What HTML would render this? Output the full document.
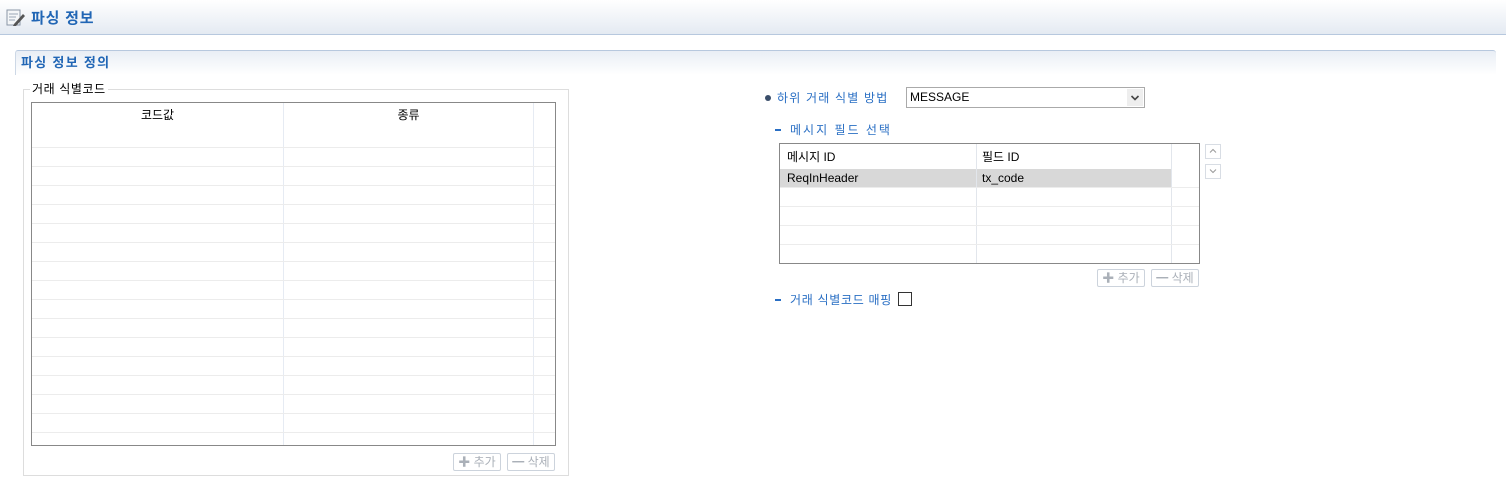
<!DOCTYPE html>
<html><head><meta charset="utf-8"><style>
*{margin:0;padding:0;box-sizing:border-box}
body{width:1506px;height:486px;background:#fff;position:relative;overflow:hidden;font-family:"Liberation Sans","Noto Sans CJK KR",sans-serif;font-size:12px;color:#000}
.a{position:absolute}
.blue{color:#2a6fc4;letter-spacing:1.2px}
.btn{position:absolute;height:18px;width:48px;border:1px solid #ccd3dc;border-radius:2px;background:#fff;color:#aab0b8;font-size:12px;line-height:16px;text-align:center}
.hl{position:absolute;height:1px;background:#ececec}
.vl{position:absolute;width:1px;background:#e6ebf3}
</style></head><body>
<div class="a" style="left:0;top:0;width:1506px;height:35px;background:linear-gradient(#fff,#e4eaf2);border-bottom:1px solid #b7c8de"></div>
<svg class="a" style="left:6px;top:9px" width="20" height="18" viewBox="0 0 20 18"><rect x="1" y="1" width="13" height="15" fill="#f4f6f8" stroke="#8a96a6"/><line x1="3" y1="5" x2="12" y2="5" stroke="#9aa6b6"/><line x1="3" y1="8" x2="10" y2="8" stroke="#9aa6b6"/><line x1="3" y1="11" x2="9" y2="11" stroke="#9aa6b6"/><path d="M8 15 L17 5 L19 7 L10 17 L7 17Z" fill="#555"/></svg>
<div class="a" style="left:31px;top:7px;font-size:15px;font-weight:bold;color:#2166b5;letter-spacing:0.8px">파싱 정보</div>
<div class="a" style="left:15px;top:50px;width:1481px;height:25px;background:linear-gradient(#e9eef5,#fff);border-top:1px solid #b7c8de;border-left:1px solid #cdd8e6;border-radius:3px 3px 0 0"></div>
<div class="a" style="left:21px;top:52px;font-size:13px;font-weight:bold;color:#2166b5;letter-spacing:1.3px">파싱 정보 정의</div>

<div class="a" style="left:23px;top:89px;width:546px;height:387px;border:1px solid #ddd"></div>
<div class="a" style="left:30px;top:80px;background:#fff;padding:0 2px;font-size:12px;letter-spacing:0.6px">거래 식별코드</div>
<div class="a" style="left:31px;top:102px;width:525px;height:344px;border:1px solid #888"></div>
<div class="vl" style="left:283px;top:103px;height:342px"></div>
<div class="vl" style="left:533px;top:103px;height:342px"></div>
<div class="a" style="left:32px;top:106px;width:251px;text-align:center">코드값</div>
<div class="a" style="left:284px;top:106px;width:249px;text-align:center">종류</div>
<div class="hl" style="left:32px;top:147px;width:523px"></div><div class="hl" style="left:32px;top:166px;width:523px"></div><div class="hl" style="left:32px;top:185px;width:523px"></div><div class="hl" style="left:32px;top:204px;width:523px"></div><div class="hl" style="left:32px;top:223px;width:523px"></div><div class="hl" style="left:32px;top:242px;width:523px"></div><div class="hl" style="left:32px;top:261px;width:523px"></div><div class="hl" style="left:32px;top:280px;width:523px"></div><div class="hl" style="left:32px;top:299px;width:523px"></div><div class="hl" style="left:32px;top:318px;width:523px"></div><div class="hl" style="left:32px;top:337px;width:523px"></div><div class="hl" style="left:32px;top:356px;width:523px"></div><div class="hl" style="left:32px;top:375px;width:523px"></div><div class="hl" style="left:32px;top:394px;width:523px"></div><div class="hl" style="left:32px;top:413px;width:523px"></div><div class="hl" style="left:32px;top:432px;width:523px"></div>
<div class="btn" style="left:453px;top:453px"><b>✚</b> 추가</div>
<div class="btn" style="left:507px;top:453px"><b>━</b> 삭제</div>

<div class="a" style="left:765px;top:95px;width:6px;height:6px;border-radius:50%;background:#3a4e6a"></div>
<div class="a blue" style="left:777px;top:89px">하위 거래 식별 방법</div>
<div class="a" style="left:906px;top:87px;width:239px;height:21px;border:1px solid #aaa"></div>
<div class="a" style="left:910px;top:90px">MESSAGE</div>
<div class="a" style="left:1127px;top:89px;width:16px;height:17px;background:#eee"></div>
<svg class="a" style="left:1130px;top:94px" width="10" height="8" viewBox="0 0 10 8"><path d="M1.5 2 L5 5.5 L8.5 2" fill="none" stroke="#444" stroke-width="1.6"/></svg>
<div class="a" style="left:775px;top:129px;width:6px;height:2px;background:#2a6fc4"></div>
<div class="a blue" style="left:790px;top:121px;letter-spacing:2px">메시지 필드 선택</div>
<div class="a" style="left:779px;top:143px;width:421px;height:121px;border:1px solid #888"></div>
<div class="a" style="left:780px;top:169px;width:391px;height:18px;background:#d8d8d8"></div>
<div class="vl" style="left:976px;top:144px;height:119px;background:#e2e6ec"></div>
<div class="vl" style="left:1171px;top:144px;height:119px;background:#e2e6ec"></div>
<div class="hl" style="left:780px;top:187px;width:419px"></div><div class="hl" style="left:780px;top:206px;width:419px"></div><div class="hl" style="left:780px;top:225px;width:419px"></div><div class="hl" style="left:780px;top:244px;width:419px"></div>
<div class="a" style="left:787px;top:148px">메시지 ID</div>
<div class="a" style="left:982px;top:148px">필드 ID</div>
<div class="a" style="left:787px;top:171px">ReqInHeader</div>
<div class="a" style="left:982px;top:171px">tx_code</div>
<div class="a" style="left:1205px;top:144px;width:16px;height:15px;border:1px solid #d8dde4"></div>
<svg class="a" style="left:1209px;top:148px" width="8" height="6"><path d="M1 4.5 L4 1.5 L7 4.5" fill="none" stroke="#999"/></svg>
<div class="a" style="left:1205px;top:164px;width:16px;height:15px;border:1px solid #d8dde4"></div>
<svg class="a" style="left:1209px;top:168px" width="8" height="6"><path d="M1 1.5 L4 4.5 L7 1.5" fill="none" stroke="#999"/></svg>
<div class="btn" style="left:1097px;top:269px"><b>✚</b> 추가</div>
<div class="btn" style="left:1151px;top:269px"><b>━</b> 삭제</div>
<div class="a" style="left:775px;top:299px;width:6px;height:2px;background:#2a6fc4"></div>
<div class="a blue" style="left:790px;top:291px;letter-spacing:0.7px">거래 식별코드 매핑</div>
<div class="a" style="left:898px;top:292px;width:14px;height:14px;border:1px solid #333"></div>
</body></html>
